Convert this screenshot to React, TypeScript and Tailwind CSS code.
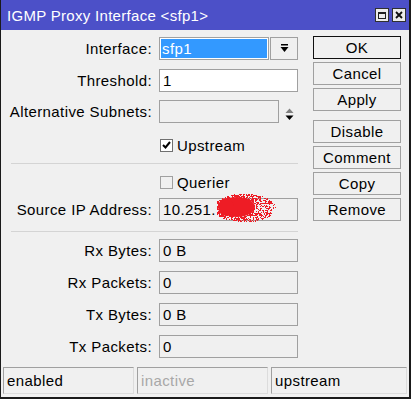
import React from "react";

const Row = ({ label, value, mt, white }: { label: string; value: string; mt: string; white?: boolean }) => (
  <div className={`flex items-center h-[23px] ${mt}`}>
    <div className="w-[152px] text-right pr-[1px] leading-none">{label}</div>
    <div
      className={`ml-[6px] w-[139px] h-[23px] border border-[#a0a0a0] flex items-center pl-[3px] leading-none ${
        white ? "bg-white" : "bg-[#f0f0f0]"
      }`}
    >
      {value}
    </div>
  </div>
);

const Btn = ({ children, mt, def }: { children: React.ReactNode; mt: string; def?: boolean }) => (
  <div
    className={`w-[88px] h-[23px] flex items-center justify-center leading-none bg-[#f0f0f0] border ${
      def ? "border-[#101010]" : "border-[#a0a0a0]"
    } ${mt}`}
  >
    {children}
  </div>
);

function makeDots() {
  let s = 12345;
  const rnd = () => {
    s = (s * 1103515245 + 12345) & 0x7fffffff;
    return s / 0x7fffffff;
  };
  const dots: { x: number; y: number }[] = [];
  for (let i = 0; i < 2200; i++) {
    const x = rnd() * 62;
    const y = rnd() * 32;
    const dx = (x - 28) / 31;
    const dy = (y - 15) / 14;
    const d = dx * dx + dy * dy;
    if (d > 1) continue;
    const p = x < 30 ? 0.97 : 0.85 - (x - 30) / 55;
    if (rnd() < p) dots.push({ x: Math.floor(x), y: Math.floor(y) });
  }
  return dots;
}
const DOTS = makeDots();

export default function App() {
  return (
    <div className="w-[411px] h-[399px] bg-[#f0f0f0] border-l border-r-2 border-b-2 border-[#1a1a1a] flex flex-col font-['Liberation_Sans',Arial,sans-serif] text-[15px] tracking-[0.4px] text-black overflow-hidden">
      {/* Title bar */}
      <div className="h-[30px] shrink-0 bg-[#4c50c8] flex items-center pl-[6px] pr-[3px] text-white">
        <span className="flex-1 text-[15px] tracking-[0.3px] leading-none">IGMP Proxy Interface &lt;sfp1&gt;</span>
        <div className="w-[14px] h-[14px] bg-[#ececec] border border-[#303030] flex items-center justify-center">
          <div className="w-[8px] h-[7px] border border-[#202020] border-t-2" />
        </div>
        <div className="ml-[3px] w-[14px] h-[14px] bg-[#ececec] border border-[#303030] flex items-center justify-center">
          <svg width="8" height="8" viewBox="0 0 8 8">
            <path d="M1 1 L7 7 M7 1 L1 7" stroke="#101010" strokeWidth="1.8" />
          </svg>
        </div>
      </div>

      {/* Body */}
      <div className="flex flex-1">
        <div className="w-[312px] flex flex-col">
          {/* Interface */}
          <div className="flex items-center h-[23px] mt-[7px]">
            <div className="w-[152px] text-right pr-[1px] leading-none">Interface:</div>
            <div className="ml-[6px] w-[110px] h-[23px] border border-[#a0a0a0] bg-white p-[1px]">
              <div className="w-full h-full bg-[#3399ff] text-white flex items-center pl-[1px] leading-none">sfp1</div>
            </div>
            <div className="ml-[1px] w-[28px] h-[23px] border border-[#a0a0a0] bg-[#f0f0f0] flex items-center justify-center">
              <svg width="9" height="9" viewBox="0 0 9 9">
                <rect x="1" y="0" width="7" height="1.5" fill="#000" />
                <path d="M0.5 3 L8.5 3 L4.5 8 Z" fill="#000" />
              </svg>
            </div>
          </div>
          {/* Threshold */}
          <Row label="Threshold:" value="1" mt="mt-[9px]" white />
          {/* Alternative Subnets */}
          <div className="flex items-center h-[23px] mt-[8px]">
            <div className="w-[152px] text-right pr-[1px] leading-none">Alternative Subnets:</div>
            <div className="ml-[6px] w-[120px] h-[23px] border border-[#a0a0a0] bg-[#f0f0f0]" />
            <div className="ml-[6px] flex flex-col items-center mt-[6px]">
              <svg width="9" height="13" viewBox="0 0 9 13">
                <path d="M0.5 5 L4.5 0.5 L8.5 5 Z" fill="#808080" />
                <path d="M0.5 7.5 L8.5 7.5 L4.5 12 Z" fill="#000" />
              </svg>
            </div>
          </div>
          {/* Upstream */}
          <div className="flex items-center h-[16px] mt-[14px]">
            <div className="ml-[159px] w-[13px] h-[13px] border border-[#707070] bg-white flex items-center justify-center">
              <svg width="9" height="8" viewBox="0 0 9 8">
                <path d="M1 4 L3.5 6.5 L8 1" stroke="#000" strokeWidth="2" fill="none" />
              </svg>
            </div>
            <span className="ml-[4px] leading-none">Upstream</span>
          </div>
          {/* separator */}
          <div className="ml-[10px] w-[287px] h-[1px] bg-[#d4d4d4] mt-[10px]" />
          {/* Querier */}
          <div className="flex items-center h-[16px] mt-[10px]">
            <div className="ml-[159px] w-[13px] h-[13px] border border-[#a0a0a0] bg-[#f0f0f0]" />
            <span className="ml-[4px] leading-none">Querier</span>
          </div>
          {/* Source IP */}
          <div className="flex items-center h-[23px] mt-[8px]">
            <div className="w-[152px] text-right pr-[1px] leading-none">Source IP Address:</div>
            <div className="relative ml-[6px] w-[139px] h-[23px] border border-[#a0a0a0] bg-[#f0f0f0] flex items-center pl-[3px] leading-none">
              10.251.
              <svg className="absolute left-[57px] top-[-6px]" width="62" height="32" viewBox="0 0 62 32">
                <ellipse cx="20" cy="14" rx="18" ry="10" fill="#ee1c25" />
                <ellipse cx="9" cy="14" rx="8" ry="9" fill="#ee1c25" />
                {DOTS.map((d, i) => (
                  <rect key={i} x={d.x} y={d.y} width="1" height="1" fill="#ee1c25" />
                ))}
              </svg>
            </div>
          </div>
          {/* separator */}
          <div className="ml-[10px] w-[287px] h-[1px] bg-[#d4d4d4] mt-[10px]" />
          <Row label="Rx Bytes:" value="0 B" mt="mt-[7px]" />
          <Row label="Rx Packets:" value="0" mt="mt-[9px]" />
          <Row label="Tx Bytes:" value="0 B" mt="mt-[9px]" />
          <Row label="Tx Packets:" value="0" mt="mt-[9px]" />
        </div>
        <div className="flex flex-col">
          <Btn mt="mt-[6px]" def>OK</Btn>
          <Btn mt="mt-[3px]">Cancel</Btn>
          <Btn mt="mt-[3px]">Apply</Btn>
          <Btn mt="mt-[9px]">Disable</Btn>
          <Btn mt="mt-[3px]">Comment</Btn>
          <Btn mt="mt-[3px]">Copy</Btn>
          <Btn mt="mt-[3px]">Remove</Btn>
        </div>
      </div>

      {/* Status bar */}
      <div className="h-[30px] shrink-0 flex items-start pl-[2px] gap-[3px]">
        <div className="w-[131px] h-[27px] border-t border-l border-[#a0a0a0] border-r border-b border-r-[#dcdcdc] border-b-[#dcdcdc] flex items-center pl-[3px] leading-none">enabled</div>
        <div className="w-[131px] h-[27px] border-t border-l border-[#a0a0a0] border-r border-b border-r-[#dcdcdc] border-b-[#dcdcdc] flex items-center pl-[3px] leading-none text-[#a8a8a8]">inactive</div>
        <div className="w-[136px] h-[27px] border-t border-l border-[#a0a0a0] border-r border-b border-r-[#dcdcdc] border-b-[#dcdcdc] flex items-center pl-[3px] leading-none">upstream</div>
      </div>
    </div>
  );
}
